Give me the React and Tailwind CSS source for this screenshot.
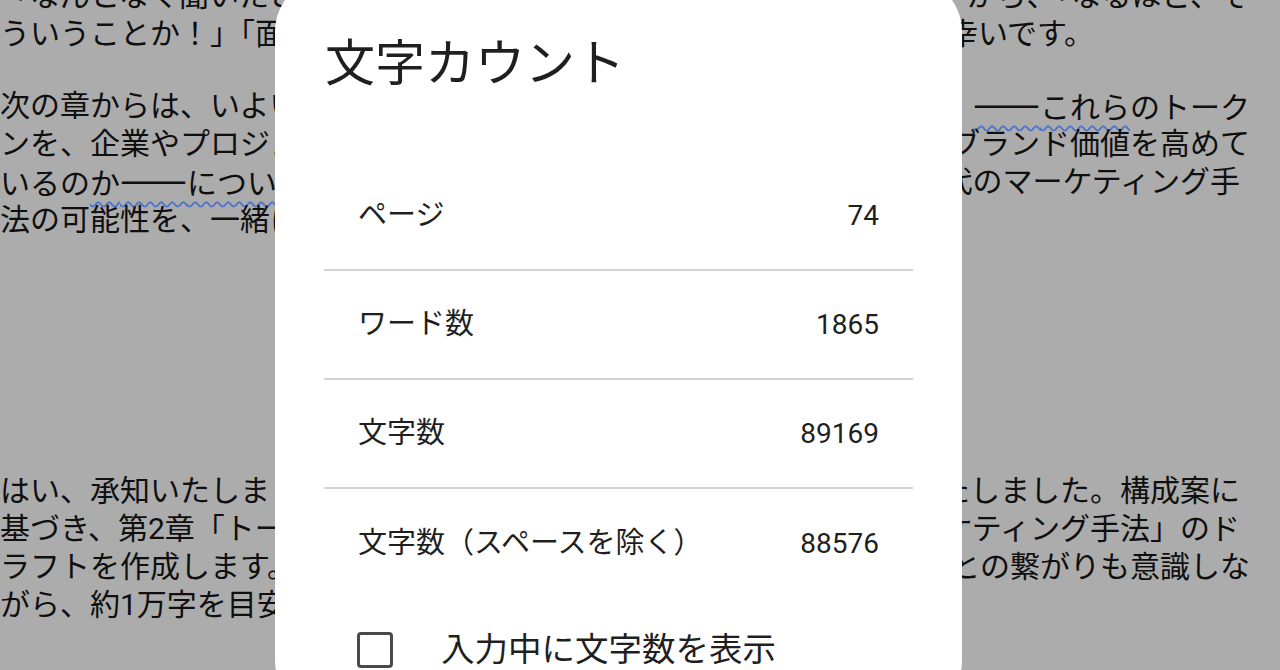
const wavy = 'underline decoration-wavy decoration-[#4f74c8] decoration-2 underline-offset-[7px]'
const dash = "font-['Noto_Sans_CJK_JP',sans-serif] text-[40px] leading-none"

const Line = ({ left, right, mr = 'mr-[30px]', className = '' }) => (
  <div className={`flex h-[38px] items-center whitespace-nowrap ${className}`}>
    <span>{left}</span>
    {right && <span className={`ml-auto ${mr}`}>{right}</span>}
  </div>
)

const rows = [
  { label: 'ページ', value: '74' },
  { label: 'ワード数', value: '1865' },
  { label: '文字数', value: '89169' },
  { label: '文字数（スペースを除く）', value: '88576' },
]

export default function App() {
  return (
    <div className="relative h-[670px] w-[1280px] overflow-hidden bg-[#acacac] font-['Roboto','Noto_Sans_CJK_JP',sans-serif] text-[30px] text-[#0f0f0f]">
      {/* document text behind the dialog */}
      <div className="-mt-[24px]">
        <div>
          <Line left="「なんとなく聞いたことがある」というレベル" right="から、「なるほど、そ" />
          <Line left="ういうことか！」「面白い！」と思っていただけたら" right="幸いです。" mr="mr-[186px]" />
        </div>
        <div className="mt-[34px]">
          <Line
            left="次の章からは、いよいよ具体的な活用事例に入ります"
            right={
              <>
                <span className={wavy}>
                  <span className={dash}>——</span>これら
                </span>
                のトーク
              </>
            }
          />
          <Line left="ンを、企業やプロジェクトがどのように活用し、" right="ブランド価値を高めて" />
          <Line
            left={
              <>
                いるの
                <span className={wavy}>
                  か<span className={dash}>——</span>について
                </span>
                、事例を交えながら次世
              </>
            }
            right="代のマーケティング手"
            mr="mr-[40px]"
          />
          <Line left="法の可能性を、一緒に探っていきましょう。" />
        </div>
        <div className="mt-[233px]">
          <Line left="はい、承知いたしました。ご提示いただいた内容を確認" right="たしました。構成案に" mr="mr-[40px]" />
          <Line left="基づき、第2章「トークンを活用した次世代マー" right="ーケティング手法」のド" mr="mr-[40px]" />
          <Line left="ラフトを作成します。第1章との流れや、全体" right="との繋がりも意識しな" />
          <Line left="がら、約1万字を目安に執筆いたします。" />
        </div>
      </div>

      {/* word count dialog */}
      <div className="absolute left-[275px] top-[-24px] h-[740px] w-[687px] rounded-[56px] bg-white text-[#1f1f1f]">
        <h2 className="pl-[50px] pt-[60px] text-[50px] font-normal leading-[56px]">文字カウント</h2>
        <div className="mx-[49px] mt-[70px]">
          {rows.map((row, i) => (
            <div
              key={row.label}
              className={`flex h-[109px] items-center justify-between px-[34px] ${
                i < rows.length - 1 ? 'border-b-2 border-[#d4d4d4]' : ''
              }`}
            >
              <span className="text-[29px]">{row.label}</span>
              <span className="text-[28px]">{row.value}</span>
            </div>
          ))}
          <div className="flex h-[104px] items-center gap-[48px] px-[33px]">
            <span className="h-[36px] w-[36px] rounded-[4px] border-[3px] border-[#4a4a4a]" />
            <span className="text-[33.5px]">入力中に文字数を表示</span>
          </div>
        </div>
      </div>
    </div>
  )
}
